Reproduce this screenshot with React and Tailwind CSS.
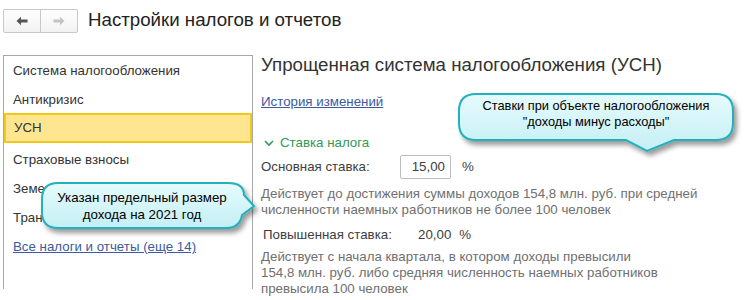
import React from 'react';

const menu = [
  { label: 'Система налогообложения' },
  { label: 'Антикризис' },
  { label: 'УСН', active: true },
  { label: 'Страховые взносы' },
  { label: 'Земельный налог' },
  { label: 'Транспортный налог' },
];

const Arrow = ({ dir, color }) => (
  <svg width="12" height="10" viewBox="0 0 12 10">
    {dir === 'left' ? (
      <path d="M0.5 5 L5 0.8 V3.5 H11.5 V6.5 H5 V9.2 Z" fill={color} />
    ) : (
      <path d="M11.5 5 L7 0.8 V3.5 H0.5 V6.5 H7 V9.2 Z" fill={color} />
    )}
  </svg>
);

// speech bubble outline
const Bubble = ({ w, h, d }) => (
  <svg width={w} height={h} viewBox={`0 0 ${w} ${h}`} className="absolute left-0 top-0">
    <defs>
      <linearGradient id={`g${w}`} x1="0" y1="0" x2="0" y2="1">
        <stop offset="0" stopColor="#e6fbfd" />
        <stop offset="1" stopColor="#c4eff4" />
      </linearGradient>
      <filter id={`s${w}`} x="-10%" y="-20%" width="130%" height="160%">
        <feDropShadow dx="3" dy="4" stdDeviation="2.5" floodColor="#000" floodOpacity="0.4" />
      </filter>
    </defs>
    <path d={d} fill={`url(#g${w})`} stroke="#22b0bd" strokeWidth="2" filter={`url(#s${w})`} />
  </svg>
);

export default function App() {
  return (
    <div className="relative w-[750px] h-[300px] overflow-hidden bg-white text-[13.3px] text-[#404040] font-['Liberation_Sans',Arial,sans-serif]">
      <div className="flex items-center h-[40px] pl-[3px] pt-[1px]">
        <div className="flex h-[24px] border border-[#c8c8c8] rounded-[2px] bg-gradient-to-b from-white to-[#f2f2f2]">
          <div className="w-[37px] flex items-center justify-center border-r border-[#c8c8c8]">
            <Arrow dir="left" color="#555" />
          </div>
          <div className="w-[36px] flex items-center justify-center">
            <Arrow dir="right" color="#c4c4c4" />
          </div>
        </div>
        <div className="ml-[10px] text-[18.7px] text-[#222]">Настройки налогов и отчетов</div>
      </div>

      <div className="flex mt-[15px]">
        <div className="ml-[3px] w-[250px] h-[234px] border-t border-x border-[#a8a8a8] flex flex-col">
          {menu.map((m) => (
            <div
              key={m.label}
              className={
                m.active
                  ? 'h-[30px] flex items-center px-[8px] bg-[#fde68f] border-2 border-[#f5c71a] mt-[-1px] mb-[2px] text-[#333]'
                  : 'h-[29px] flex items-center px-[9px] text-[#333] whitespace-nowrap'
              }
            >
              {m.label}
            </div>
          ))}
          <div className="h-[29px] flex items-center px-[9px]">
            <span className="text-[#3c5aa0] underline">Все налоги и отчеты (еще 14)</span>
          </div>
        </div>

        <div className="ml-[8px] flex flex-col">
          <div className="text-[18.7px] text-[#333] mt-[-2px] leading-[24px]">Упрощенная система налогообложения (УСН)</div>
          <div className="mt-[17px] h-[16px] leading-[16px]">
            <span className="text-[#3c5aa0] underline">История изменений</span>
          </div>
          <div className="mt-[25px] flex items-center gap-[6px] text-[#2e9a55] leading-[16px]">
            <svg width="10" height="8" viewBox="0 0 10 8" className="ml-[3px]">
              <path d="M1 2 L5 6 L9 2" fill="none" stroke="#2e9a55" strokeWidth="1.6" />
            </svg>
            Ставка налога
          </div>
          <div className="mt-[4px] flex items-center h-[24px]">
            <span className="w-[139px]">Основная ставка:</span>
            <div className="w-[51px] h-[24px] border border-[#bdbdbd] rounded-[2px] flex items-center justify-end pr-[5px]">15,00</div>
            <span className="ml-[11px]">%</span>
          </div>
          <div className="mt-[7px] leading-[16px] text-[#707070] whitespace-nowrap">
            Действует до достижения суммы доходов 154,8 млн. руб. при средней
            <br />
            численности наемных работников не более 100 человек
          </div>
          <div className="mt-[8px] flex items-center h-[18px] pl-[2px]">
            <span className="w-[155px]">Повышенная ставка:</span>
            <span>20,00</span>
            <span className="ml-[8px]">%</span>
          </div>
          <div className="mt-[5px] leading-[16px] text-[#707070] whitespace-nowrap">
            Действует с начала квартала, в котором доходы превысили
            <br />
            154,8 млн. руб. либо средняя численность наемных работников
            <br />
            превысила 100 человек
          </div>
        </div>
      </div>

      <div className="absolute left-[450px] top-[85px] w-[300px] h-[80px]">
        <Bubble
          w={300}
          h={80}
          d="M26 9 H266 Q283 9 283 26 V38 Q283 55 266 55 H224 L197 66 L176 55 H26 Q9 55 9 38 V26 Q9 9 26 9 Z"
        />
        <div className="absolute left-[9px] top-[13px] w-[274px] text-center text-[12.8px] leading-[16px] text-black">
          Ставки при объекте налогообложения
          <br />
          "доходы минус расходы"
        </div>
      </div>

      <div className="absolute left-[30px] top-[175px] w-[240px] h-[65px]">
        <Bubble
          w={240}
          h={65}
          d="M28 8 H198 Q214 8 214 20 L224 31 L212 40 Q210 53 196 53 H28 Q12 53 12 37 V24 Q12 8 28 8 Z"
        />
        <div className="absolute left-[12px] top-[14px] w-[200px] text-center text-[13.3px] leading-[17px] text-black">
          Указан предельный размер
          <br />
          дохода на 2021 год
        </div>
      </div>
    </div>
  );
}
